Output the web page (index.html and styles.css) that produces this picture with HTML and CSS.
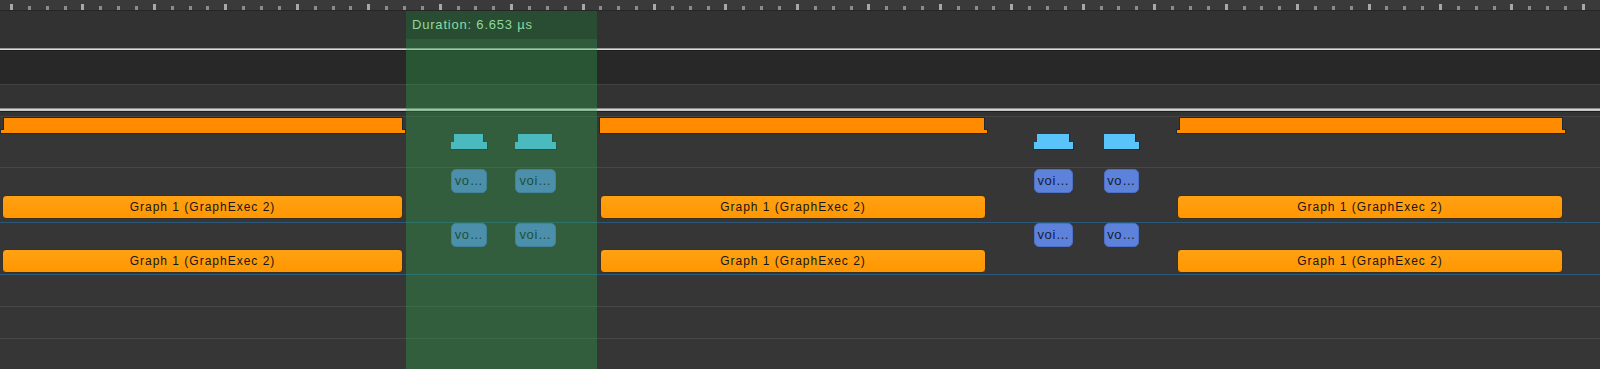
FILE: index.html
```html
<!DOCTYPE html>
<html lang="en">
<head>
<meta charset="utf-8">
<title>Timeline</title>
<link rel="stylesheet" href="styles.css">
</head>
<body>
<div class="timeline">
  <div class="ruler"></div>
  <div class="area-top"></div>
  <div class="divider"></div>
  <div class="band-dark"></div>
  <div class="band"></div>
  <div class="divider divider--b"></div>

  <div class="tracks">
    <div class="track track--spacer"></div>

    <div class="track track--kernels">
      <div class="lane lane--kbar">
        <div class="kbar" style="left:1px;width:404px"></div>
        <div class="kbar kbar--nl" style="left:600px;width:387px"></div>
        <div class="kbar" style="left:1177px;width:388px"></div>
      </div>
      <div class="lane lane--mini">
        <div class="mini" style="left:451px;width:36px"></div>
        <div class="mini" style="left:515px;width:41px"></div>
        <div class="mini" style="left:1034px;width:39px"></div>
        <div class="mini mini--fl" style="left:1104px;width:35px"></div>
      </div>
    </div>

    <div class="track track--graph track--a">
      <div class="lane lane--btn">
        <div class="evt" style="left:451px;width:36px">vo…</div>
        <div class="evt" style="left:515px;width:41px">voi…</div>
        <div class="evt" style="left:1034px;width:39px">voi…</div>
        <div class="evt" style="left:1104px;width:35px">vo…</div>
      </div>
      <div class="lane lane--gbar">
        <div class="gbar" style="left:2px;width:401px">Graph 1 (GraphExec 2)</div>
        <div class="gbar" style="left:600px;width:386px">Graph 1 (GraphExec 2)</div>
        <div class="gbar" style="left:1177px;width:386px">Graph 1 (GraphExec 2)</div>
      </div>
    </div>

    <div class="track track--graph track--b">
      <div class="lane lane--btn">
        <div class="evt" style="left:451px;width:36px">vo…</div>
        <div class="evt" style="left:515px;width:41px">voi…</div>
        <div class="evt" style="left:1034px;width:39px">voi…</div>
        <div class="evt" style="left:1104px;width:35px">vo…</div>
      </div>
      <div class="lane lane--gbar">
        <div class="gbar" style="left:2px;width:401px">Graph 1 (GraphExec 2)</div>
        <div class="gbar" style="left:600px;width:386px">Graph 1 (GraphExec 2)</div>
        <div class="gbar" style="left:1177px;width:386px">Graph 1 (GraphExec 2)</div>
      </div>
    </div>

    <div class="track track--empty"></div>
    <div class="track track--empty"></div>
    <div class="track track--last"></div>
  </div>

  <div class="selection" style="left:406px;width:191px">
    <div class="selection__label">Duration: 6.653 µs</div>
  </div>
</div>
</body>
</html>
```

FILE: styles.css
```css
* { box-sizing: border-box; }

html, body {
  margin: 0;
  padding: 0;
  background: #363636;
}

body {
  width: 1600px;
  height: 369px;
  overflow: hidden;
  font-family: "Liberation Sans", Arial, sans-serif;
}

.timeline {
  position: relative;
  width: 1600px;
  height: 369px;
  display: flex;
  flex-direction: column;
}

/* ruler */
.ruler {
  flex: 0 0 11px;
  background-color: #3a3a3a;
  border-bottom: 1px solid #262626;
  background-image:
    repeating-linear-gradient(90deg, #a8a8a8 0 3px, transparent 3px 71.45px),
    repeating-linear-gradient(90deg, #8c8c8c 0 3px, transparent 3px 17.8625px);
  background-size: 100% 6px, 100% 4px;
  background-position: 10px 4px, 10px 6px;
  background-repeat: no-repeat;
}

.area-top {
  flex: 0 0 37px;
  background: #323232;
}

.divider {
  flex: 0 0 4px;
  background: linear-gradient(to bottom,
    #9a9a9a 0 1px, #dcdcdc 1px 2px, #1c1c1c 2px 3px, #2a2a2a 3px 4px);
}

.divider--b {
  background: linear-gradient(to bottom,
    #8a8a8a 0 1px, #d8d8d8 1px 2px, #c0c0c0 2px 3px, #1e1e1e 3px 4px);
}

.band-dark {
  flex: 0 0 33px;
  background: #282828;
  border-bottom: 1px solid #424242;
}

.band {
  flex: 0 0 23px;
  background: #333333;
}

/* tracks */
.tracks {
  flex: 1 1 auto;
  display: flex;
  flex-direction: column;
  background: #363636;
}

.track {
  display: flex;
  flex-direction: column;
  border-bottom: 1px solid #474747;
}

.track--spacer {
  flex: 0 0 5px;
  background: #333333;
  border-bottom-color: #444444;
}

.track--kernels { flex: 0 0 51px; }
.track--a { flex: 0 0 55px; border-bottom-color: #2b5878; }
.track--b { flex: 0 0 52px; border-bottom-color: #2b5878; }
.track--empty { flex: 0 0 32px; }
.track--last { flex: 1 1 auto; border-bottom: 0; }

.lane {
  position: relative;
  flex: 0 0 auto;
}

.lane--kbar { height: 16px; margin-top: 1px; }
.lane--mini { height: 16px; }
.track--a .lane--btn { height: 24px; margin-top: 1px; }
.track--b .lane--btn { height: 24px; margin-top: 0; }
.lane--gbar { height: 24px; margin-top: 2px; }

/* kernel bars (stepped shape) */
.kbar {
  position: absolute;
  top: 0;
  height: 15px;
  filter:
    drop-shadow(1px 0 0 #1c2a33)
    drop-shadow(-1px 0 0 #1c2a33)
    drop-shadow(0 1px 0 #1c2a33)
    drop-shadow(0 -1px 0 #1c2a33);
}

.kbar::before,
.kbar::after {
  content: "";
  position: absolute;
  background: #ff8c00;
}

.kbar::before { left: 0; right: 0; bottom: 0; height: 3px; }
.kbar::after { left: 3px; right: 3px; top: 0; bottom: 0; }
.kbar--nl::after { left: 0; }

/* small memcpy-like blocks */
.mini {
  position: absolute;
  top: 0;
  height: 15px;
  filter:
    drop-shadow(1px 0 0 #1d2b36)
    drop-shadow(0 1px 0 #1d2b36);
}

.mini::before,
.mini::after {
  content: "";
  position: absolute;
  background: #5ac4fa;
}

.mini::before { left: 0; right: 0; bottom: 0; height: 7px; }
.mini::after { left: 3px; right: 4px; top: 0; bottom: 0; }
.mini--fl::after { left: 0; }

/* function call buttons */
.evt {
  position: absolute;
  top: 0;
  height: 24px;
  border-radius: 5px;
  background: #5d82dc;
  border: 1px solid #4d6fc6;
  color: #141c30;
  font-size: 13px;
  letter-spacing: 0.6px;
  line-height: 22px;
  text-align: center;
  white-space: nowrap;
  overflow: hidden;
}

/* graph bars */
.gbar {
  position: absolute;
  top: 0;
  height: 24px;
  border-radius: 4px;
  background: linear-gradient(to bottom, #ffa214, #ff9700);
  border: 1px solid #3a3124;
  color: #161616;
  font-size: 12px;
  letter-spacing: 1px;
  line-height: 22px;
  text-align: center;
  white-space: nowrap;
  overflow: hidden;
}

/* selection overlay */
.selection {
  position: absolute;
  top: 11px;
  bottom: 0;
  background: rgba(45, 168, 77, 0.35);
}

.selection__label {
  height: 28px;
  background: rgba(0, 0, 0, 0.15);
  color: #8fd9a0;
  font-size: 13px;
  letter-spacing: 0.8px;
  line-height: 28px;
  padding-left: 6px;
  white-space: nowrap;
}
```
